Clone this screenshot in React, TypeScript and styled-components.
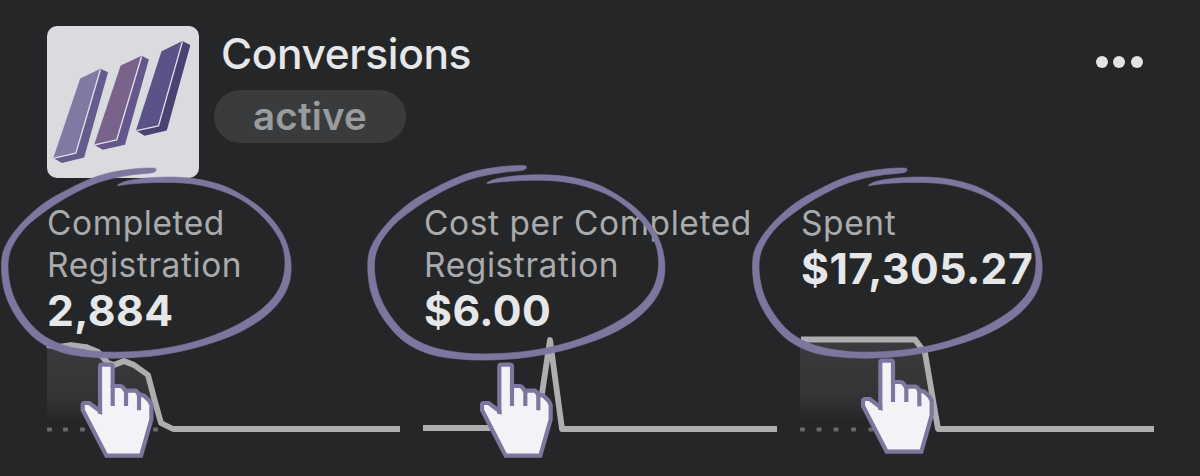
import React from "react";
import styled, { createGlobalStyle } from "styled-components";

const GlobalStyle = createGlobalStyle`
  * { box-sizing: border-box; }
  body { margin: 0; background: #252628; }
`;

const Card = styled.main`
  position: relative;
  width: 1200px;
  height: 476px;
  padding: 26px 47px 0;
  overflow: hidden;
  background: #252628;
  color: #e6e7e9;
  font-family: Inter, "Liberation Sans", sans-serif;
`;

const Header = styled.header`
  display: flex;
  align-items: flex-start;
  height: 176px;
`;

const Logo = styled.svg`
  display: block;
  flex: none;
  width: 152px;
  height: 152px;
  border-radius: 10px;
  background: #dadbdf;
`;

const Heading = styled.div`
  display: flex;
  flex-direction: column;
  align-items: flex-start;
  margin-left: 15px;
`;

const Title = styled.h1`
  margin: 0 0 0 7px;
  font-size: 42.5px;
  line-height: 55px;
  font-weight: 500;
  letter-spacing: -0.4px;
  white-space: nowrap;
`;

const Status = styled.span`
  display: flex;
  align-items: center;
  justify-content: center;
  width: 192px;
  height: 53px;
  padding-bottom: 2px;
  margin-top: 9px;
  border-radius: 27px;
  background: #3a3b3d;
  color: #989c9f;
  font-size: 38.5px;
  font-weight: 600;
  letter-spacing: 0.2px;
`;

const MoreButton = styled.button`
  display: flex;
  gap: 5.5px;
  margin: 29.5px 10.5px 0 auto;
  padding: 0;
  border: 0;
  background: none;
`;

const Dot = styled.span`
  width: 12px;
  height: 12px;
  border-radius: 50%;
  background: #e2e3e5;
`;

const Metrics = styled.section`
  display: grid;
  grid-template-columns: repeat(3, 353px);
  column-gap: 24px;
  height: 234px;
`;

const Metric = styled.article`
  display: flex;
  flex-direction: column;
`;

const Label = styled.div`
  color: #a9abad;
  font-size: 33.5px;
  line-height: 42px;
  letter-spacing: 0.58px;
  white-space: pre-line;
`;

const Value = styled.div`
  font-size: 42.7px;
  line-height: 49px;
  font-weight: 700;
  letter-spacing: 0.45px;
`;

const Chart = styled.svg`
  display: block;
  width: 353px;
  height: 100px;
  margin-top: auto;
`;

const Annotations = styled.svg`
  position: absolute;
  inset: 0;
  pointer-events: none;
`;

type Point = [number, number];

const outerEdge: Point[] = [
  [156, 170], [153, 168], [133, 169], [110, 172.7], [90, 179], [67, 190], [43, 204], [20, 225],
  [5, 247], [1.5, 267], [5, 293], [17, 318], [37, 340], [63, 352.7], [93, 357.3],
  [123, 358], [160, 355], [200, 346.5], [240, 332], [270, 312], [287, 289], [291, 263],
  [283, 235], [263, 210], [233, 190], [207, 181], [180, 177.3], [150, 177.7], [127, 181], [117.5, 185.5],
];
const innerEdge: Point[] = [
  [130, 184], [157, 182.5], [187, 183.3], [213, 188.3], [240, 199], [263, 217], [280, 240],
  [285, 263], [280, 287], [263, 308], [233, 327], [197, 341], [160, 349], [123, 352],
  [93, 351], [63, 345], [40, 333], [23, 314], [12, 292], [8, 267], [12, 247],
  [26, 227], [47, 210], [70, 195.5], [93, 184.5], [113, 178.3], [133, 174.7], [152, 172.7],
];

/* Catmull-Rom spline through a closed ring of points. */
function smoothRing(points: Point[]): string {
  const n = points.length;
  let d = `M${points[0].join(" ")}`;
  for (let i = 0; i < n; i++) {
    const a = points[(i + n - 1) % n];
    const b = points[i];
    const c = points[(i + 1) % n];
    const e = points[(i + 2) % n];
    d += `C${b[0] + (c[0] - a[0]) / 6} ${b[1] + (c[1] - a[1]) / 6} ${c[0] - (e[0] - b[0]) / 6} ${c[1] - (e[1] - b[1]) / 6} ${c[0]} ${c[1]}`;
  }
  return d + "Z";
}

const loopPath = smoothRing([...outerEdge, ...innerEdge]);

const Loop = ({ transform }: { transform?: string }) => (
  <path d={loopPath} fill="#7d779f" stroke="#7d779f" strokeWidth="0.6" transform={transform} />
);

const Hand = ({ x, y }: { x: number; y: number }) => (
  <g transform={`translate(${x} ${y}) scale(.33333)`} stroke="#7d779f" strokeWidth="12.5" strokeLinejoin="round">
    <path
      fill="#f2f3f7"
      strokeLinejoin="miter"
      d="M58 12Q58 6 64 6H90Q96 6 96 12V70H118Q126 70 130 78L134 84H162Q169 84 173 94L190 99L205 113L212 126V170L181 279H77L6 142V127Q6 121 12 121H26L58 145Z"
    />
    <path fill="none" strokeLinecap="butt" d="M96 66V130M136 80V130M175 90V143M58 140V154" />
  </g>
);

interface MetricData {
  label: string;
  value: string;
  line: string;
  area?: string;
  dots: number[];
}

const metrics: MetricData[] = [
  {
    label: "Completed\nRegistration",
    value: "2,884",
    line: "M0 15L10 17L24 15L39 17L51 22L61 33L67 35L77 31L87 35L101 45L107 68L114 93L126 99H353",
    area: "M0 14H40L61 31L77 31L101 45L113 91H0Z",
    dots: [0, 16, 33, 106],
  },
  {
    label: "Cost per Completed\nRegistration",
    value: "$6.00",
    line: "M-1 98H112L116 77L126 10L138 99H353",
    dots: [],
  },
  {
    label: "Spent",
    value: "$17,305.27",
    line: "M0 9.5H114L124 23L137 99H353",
    area: "M-1 9H114L124 23L136 91H-1Z",
    dots: [-1, 15.5, 32.5, 50, 67.5],
  },
];

const App = () => (
  <>
    <GlobalStyle />
    <Card>
      <Header>
        <Logo viewBox="50 48 458 456">
          <g stroke="#e3e0ee" strokeWidth="4" strokeLinejoin="round">
            <path fill="#7e7aa2" stroke="none" d="M150 205L211 176L137 430L69 445Z" />
            <path fill="#625d8d" stroke="none" d="M211 176L234 186L162 443L95 460L69 445L137 430Z" />
            <path fill="none" d="M211 178L137 430L71 445" />
            <path fill="#79638b" stroke="none" d="M272 166L335 137L260 390L192 405Z" />
            <path fill="#65568b" stroke="none" d="M335 137L357 148L285 405L218 420L192 405L260 390Z" />
            <path fill="none" d="M335 139L260 390L194 405" />
            <path fill="#5b5287" stroke="none" d="M395 123L458 92L386 348L318 362Z" />
            <path fill="#4a4273" stroke="none" d="M458 92L482 104L411 362L344 378L318 362L386 348Z" />
            <path fill="none" d="M458 94L386 348L320 362" />
          </g>
        </Logo>
        <Heading>
          <Title>Conversions</Title>
          <Status>active</Status>
        </Heading>
        <MoreButton aria-label="More options">
          <Dot />
          <Dot />
          <Dot />
        </MoreButton>
      </Header>
      <Metrics>
        {metrics.map((m, i) => (
          <Metric key={m.label}>
            <Label>{m.label}</Label>
            <Value>{m.value}</Value>
            <Chart viewBox="0 6 353 100" overflow="visible">
              <defs>
                <linearGradient id={`fade${i}`} x1="0" y1="0" x2="0" y2="1">
                  <stop offset="0" stopColor="#3b3b3d" />
                  <stop offset="0.7" stopColor="#343436" />
                  <stop offset="1" stopColor="#252628" />
                </linearGradient>
              </defs>
              {m.area && <path d={m.area} fill={`url(#fade${i})`} />}
              {m.dots.map((x) => (
                <rect key={x} x={x} y="97.5" width="5" height="4" rx="1" fill="#68696b" />
              ))}
              <path d={m.line} fill="none" stroke="#adaeb0" strokeWidth="5.8" strokeLinejoin="round" />
            </Chart>
          </Metric>
        ))}
      </Metrics>
      <Annotations width="1200" height="476" viewBox="0 0 1200 476">
        <Loop />
        <Loop transform="translate(366.2 -6.3) scale(1.026 1.023)" />
        <Loop transform="translate(751 0)" />
        <Hand x={80.7} y={362.7} />
        <Hand x={480} y={362.7} />
        <Hand x={861} y={358.7} />
      </Annotations>
    </Card>
  </>
);

export default App;
